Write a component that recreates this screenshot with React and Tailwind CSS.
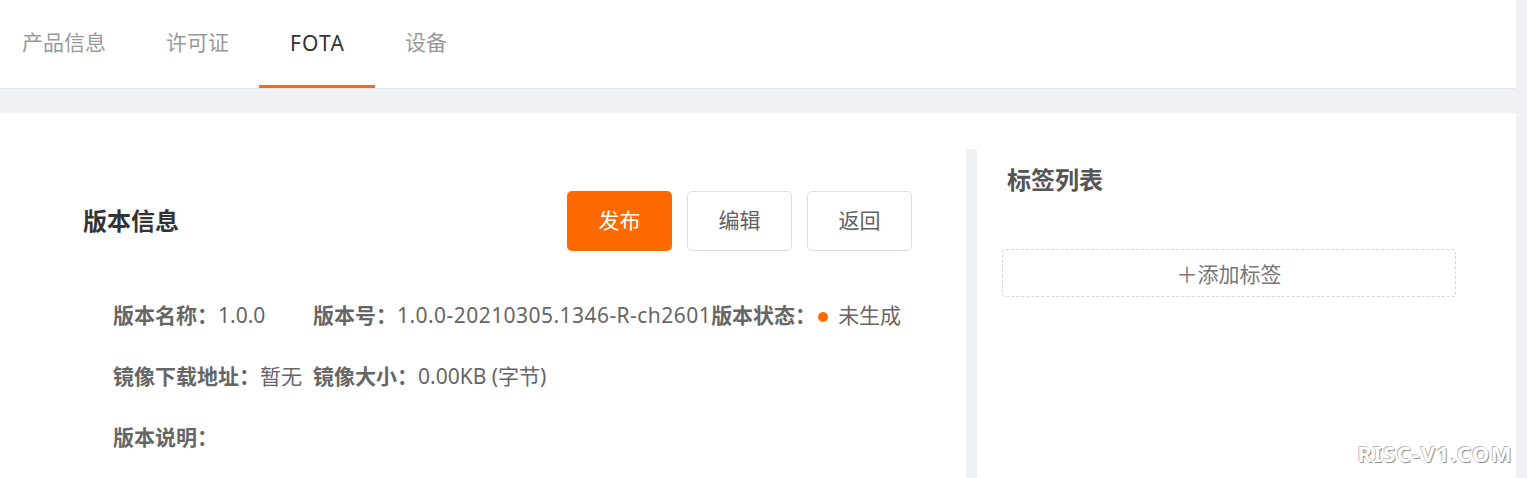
import React from 'react';

const tabs = ['产品信息', '许可证', 'FOTA', '设备'];

const InfoItem = ({ label, children }) => (
  <div className="min-w-[200px] whitespace-nowrap flex items-center">
    <span className="font-bold text-[#666]">{label}</span>
    <span className="text-[#666]">{children}</span>
  </div>
);

const App = () => {
  return (
    <div
      className="relative w-[1527px] h-[478px] overflow-hidden bg-[#f0f1f5] flex"
      style={{ fontFamily: '"Noto Sans", "Noto Sans CJK SC", sans-serif' }}
    >
      <div className="w-[1516px] flex flex-col">
        <div className="h-[89px] bg-white border-b border-[#e4e6eb] flex">
          {tabs.map((t) => (
            <div
              key={t}
              className={
                t === 'FOTA'
                  ? 'h-[88px] pl-[31px] pr-[30px] flex items-center text-[21px] tracking-[1.2px] text-[#333] border-b-[3px] border-[#ff6a00] pt-[3px]'
                  : 'h-[88px] px-[30px] first:pl-[22px] flex items-center text-[21px] text-[#999] pb-[3px]'
              }
            >
              {t}
            </div>
          ))}
        </div>
        <div className="h-[24px]" />
        <div className="flex-1 bg-white flex">
          <div className="w-[966px] pt-[78px] pl-[83px] pr-[54px]">
            <div className="flex items-center justify-between">
              <h2 className="text-[24px] font-bold text-[#333]">版本信息</h2>
              <div className="flex gap-[15px]">
                <button className="w-[105px] h-[60px] rounded-[5px] bg-[#ff6a00] text-white text-[21px]">发布</button>
                <button className="w-[105px] h-[60px] rounded-[5px] border border-[#dcdfe6] text-[#606266] text-[21px]">编辑</button>
                <button className="w-[105px] h-[60px] rounded-[5px] border border-[#dcdfe6] text-[#606266] text-[21px]">返回</button>
              </div>
            </div>
            <div className="mt-[49px] pl-[30px] flex flex-col gap-[31px] text-[21px] leading-[30px]">
              <div className="flex">
                <InfoItem label="版本名称：">1.0.0</InfoItem>
                <InfoItem label="版本号：">
                  <span className="tracking-[0.45px]">1.0.0-20210305.1346-R-ch2601</span>
                </InfoItem>
                <InfoItem label="版本状态：">
                  <span className="inline-block w-[10px] h-[10px] rounded-full bg-[#ff6a00] ml-[2px] mr-[10px] align-middle" />
                  未生成
                </InfoItem>
              </div>
              <div className="flex">
                <InfoItem label="镜像下载地址：">暂无</InfoItem>
                <InfoItem label="镜像大小：">0.00KB (字节)</InfoItem>
              </div>
              <div className="flex">
                <InfoItem label="版本说明：" />
              </div>
            </div>
          </div>
          <div className="w-[11px] mt-[36px] bg-[#f0f1f5]" />
          <div className="flex-1 pt-[51px] pr-[60px]">
            <h3 className="pl-[30px] text-[24px] leading-[32px] font-bold text-[#555]">标签列表</h3>
            <div className="mt-[53px] ml-[25px] h-[48px] rounded-[4px] border border-dashed border-[#d4d6db] flex items-center justify-center pt-[3px] text-[21px] text-[#777]">
              ＋添加标签
            </div>
          </div>
        </div>
      </div>
      <div className="absolute right-[14px] bottom-[8px] text-[22px] font-bold tracking-[1.4px] text-white [text-shadow:1px_1px_1px_#888,-1px_-1px_0_#bbb]">
        RISC-V1.COM
      </div>
    </div>
  );
};

export default App;
